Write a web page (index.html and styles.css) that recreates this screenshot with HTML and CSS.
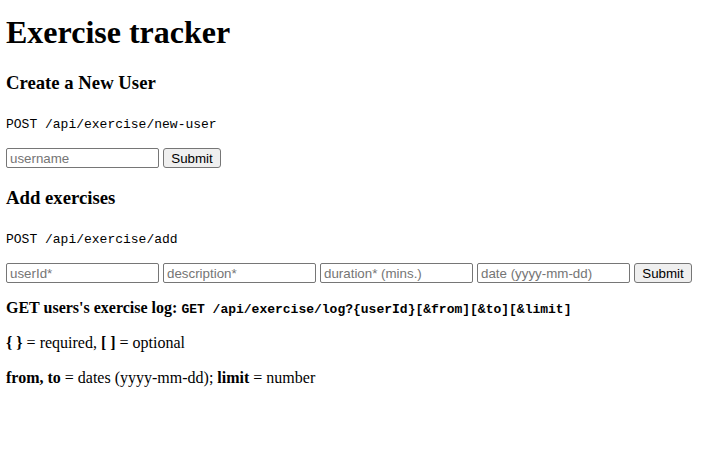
FILE: index.html
```html
<!DOCTYPE html>
<html>
<head>
<meta charset="utf-8">
<title>Exercise tracker</title>
<link rel="stylesheet" href="styles.css">
</head>
<body>
<h1 class="title">Exercise tracker</h1>
<form class="block">
  <h3 class="sub">Create a New User</h3>
  <p class="endpoint"><code class="code">POST /api/exercise/new-user</code></p>
  <div class="row">
    <input class="field" type="text" placeholder="username"><button class="btn" type="button">Submit</button>
  </div>
</form>
<form class="block">
  <h3 class="sub">Add exercises</h3>
  <p class="endpoint"><code class="code">POST /api/exercise/add</code></p>
  <div class="row">
    <input class="field" type="text" placeholder="userId*"><input class="field" type="text" placeholder="description*"><input class="field" type="text" placeholder="duration* (mins.)"><input class="field" type="text" placeholder="date (yyyy-mm-dd)"><button class="btn" type="button">Submit</button>
  </div>
</form>
<p class="text"><b>GET users's exercise log: </b><code class="code bold">GET /api/exercise/log?{userId}[&amp;from][&amp;to][&amp;limit]</code></p>
<p class="text"><b>{ }</b> = required, <b>[ ]</b> = optional</p>
<p class="text"><b>from, to</b> = dates (yyyy-mm-dd); <b>limit</b> = number</p>
</body>
</html>
```
FILE: styles.css
```css
html { background: #fff; }
body {
  margin: 0 8px 8px 6px;
  font-family: "Liberation Serif", "Times New Roman", serif;
  font-size: 16px;
  color: #000;
}
.title {
  font-size: 32px;
  font-weight: bold;
  margin: 14px 0 21px;
}
.sub {
  font-size: 18.72px;
  font-weight: bold;
  margin: 19px 0 0;
}
.block:first-of-type .sub { margin-top: 18px; }
.endpoint {
  margin: 20px 0 16px;
}
.code {
  font-family: "Liberation Mono", "Courier New", monospace;
  font-size: 13px;
}
.code.bold { font-weight: bold; }
.row {
  display: flex;
  gap: 4px;
  align-items: center;
}
.field {
  box-sizing: border-box;
  width: 153px;
  height: 20px;
  margin: 0;
  padding: 1px 3px;
  border: 1px solid #767676;
  border-radius: 2px;
  font-family: "Liberation Sans", Arial, sans-serif;
  font-size: 13.33px;
  color: #000;
  background: #fff;
}
.field::placeholder { color: #757575; }
.btn {
  box-sizing: border-box;
  width: 58px;
  height: 20px;
  margin: 0;
  padding: 0 6px;
  border: 1px solid #767676;
  border-radius: 3px;
  background: #efefef;
  font-family: "Liberation Sans", Arial, sans-serif;
  font-size: 13.33px;
  color: #000;
}
.text {
  margin: 17px 0;
}
.block + .text { margin-top: 16px; }
```
